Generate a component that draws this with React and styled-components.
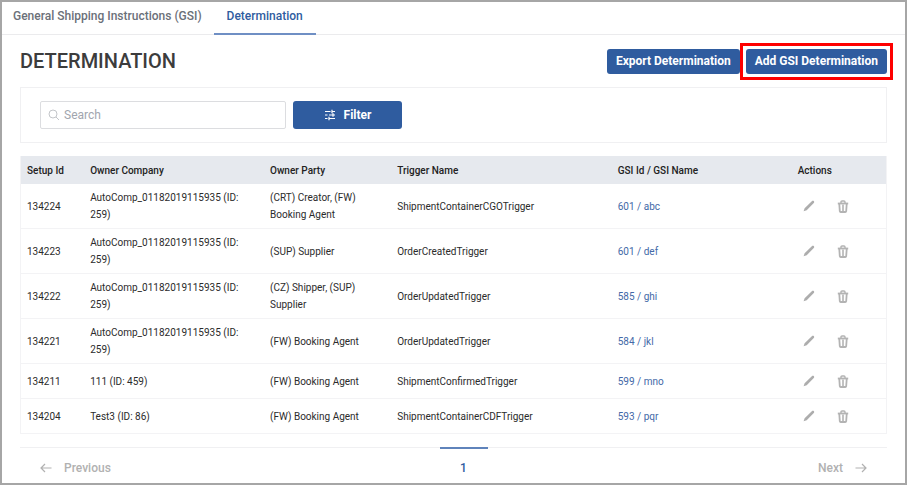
import React from "react";
import styled, { createGlobalStyle } from "styled-components";

const rows = [
  {
    id: "134224",
    company: "AutoComp_01182019115935 (ID: 259)",
    party: "(CRT) Creator, (FW) Booking Agent",
    trigger: "ShipmentContainerCGOTrigger",
    gsi: "601 / abc",
  },
  {
    id: "134223",
    company: "AutoComp_01182019115935 (ID: 259)",
    party: "(SUP) Supplier",
    trigger: "OrderCreatedTrigger",
    gsi: "601 / def",
  },
  {
    id: "134222",
    company: "AutoComp_01182019115935 (ID: 259)",
    party: "(CZ) Shipper, (SUP) Supplier",
    trigger: "OrderUpdatedTrigger",
    gsi: "585 / ghi",
  },
  {
    id: "134221",
    company: "AutoComp_01182019115935 (ID: 259)",
    party: "(FW) Booking Agent",
    trigger: "OrderUpdatedTrigger",
    gsi: "584 / jkl",
  },
  {
    id: "134211",
    company: "111 (ID: 459)",
    party: "(FW) Booking Agent",
    trigger: "ShipmentConfirmedTrigger",
    gsi: "599 / mno",
  },
  {
    id: "134204",
    company: "Test3 (ID: 86)",
    party: "(FW) Booking Agent",
    trigger: "ShipmentContainerCDFTrigger",
    gsi: "593 / pqr",
  },
];

const SearchIcon = () => (
  <svg width="12" height="12" viewBox="0 0 12 12" fill="none" stroke="#c3c5c9">
    <circle cx="5" cy="5" r="4" />
    <path d="M8 8l3 3" />
  </svg>
);

const FilterIcon = () => (
  <svg width="12" height="12" viewBox="0 0 12 12" fill="none" stroke="#fff" strokeWidth="1.2">
    <path d="M1 2.5h5.5M8 2.5h3M8 .8v3.4M1 6h2.5M5 6h6M9 4.3v3.4M1 9.5h2.5M5 9.5h6M5 7.8v3.4" />
  </svg>
);

const PencilIcon = () => (
  <svg width="12" height="12" viewBox="0 0 12 12" fill="#adadad">
    <path d="M.6 11.3l1-3.1 7.2-7c.6-.6 1.5-.6 2-.1s.6 1.4 0 2L3.7 10.3z" />
  </svg>
);

const TrashIcon = () => (
  <svg width="12" height="13" viewBox="0 0 12 13" fill="none" stroke="#b3b3b3">
    <path d="M.8 3.5h10.4" strokeWidth="1.8" />
    <path d="M4 3V2q0-1 1-1h2q1 0 1 1v1" strokeWidth="1.4" />
    <path d="M2.3 4l.5 7.2q.1.8.9.8h4.6q.8 0 .9-.8L9.7 4" strokeWidth="1.8" />
    <path d="M6 4.5v7" strokeWidth="1.6" />
  </svg>
);

const ArrowIcon = ({ d }) => (
  <svg width="12" height="12" viewBox="0 0 12 12" fill="none" stroke="#b1b1b1" strokeWidth="1.2">
    <path d={d} />
  </svg>
);

const App = () => {
  return (
    <Wrapper>
      <GlobalStyles />
      <Tabs>
        <Tab href="#gsi">General Shipping Instructions (GSI)</Tab>
        <Tab href="#determination" $active>
          Determination
        </Tab>
      </Tabs>
      <Content>
        <TitleRow>
          <Title>DETERMINATION</Title>
          <Button>Export Determination</Button>
          <Highlight>
            <Button>Add GSI Determination</Button>
          </Highlight>
        </TitleRow>

        <SearchPanel>
          <SearchBox>
            <SearchIcon />
            <SearchInput type="text" placeholder="Search" aria-label="Search" />
          </SearchBox>
          <FilterButton>
            <FilterIcon />
            Filter
          </FilterButton>
        </SearchPanel>

        <Table>
          <thead>
            <tr>
              <Th $width="7.3%">Setup Id</Th>
              <Th $width="20.8%">Owner Company</Th>
              <Th $width="14.7%">Owner Party</Th>
              <Th $width="25.5%">Trigger Name</Th>
              <Th $width="20.8%">GSI Id / GSI Name</Th>
              <Th>Actions</Th>
            </tr>
          </thead>
          <tbody>
            {rows.map((row) => (
              <tr key={row.id}>
                <Td>{row.id}</Td>
                <Td>{row.company}</Td>
                <Td>{row.party}</Td>
                <Td>{row.trigger}</Td>
                <Td>
                  <GsiLink href="#gsi">{row.gsi}</GsiLink>
                </Td>
                <Td>
                  <Actions>
                    <IconButton aria-label={`Edit ${row.id}`}>
                      <PencilIcon />
                    </IconButton>
                    <IconButton aria-label={`Delete ${row.id}`}>
                      <TrashIcon />
                    </IconButton>
                  </Actions>
                </Td>
              </tr>
            ))}
          </tbody>
        </Table>

        <Pagination>
          <PageStep>
            <ArrowIcon d="M11.5 6H1M5 2L1 6l4 4" />
            Previous
          </PageStep>
          <PageNumber aria-current="page">1</PageNumber>
          <PageStep $end>
            Next
            <ArrowIcon d="M.5 6H11M7 2l4 4-4 4" />
          </PageStep>
        </Pagination>
      </Content>
    </Wrapper>
  );
};

const GlobalStyles = createGlobalStyle`
  * {
    box-sizing: border-box;
  }

  body {
    margin: 0;
    background: #fff;
    font-family: Roboto, "Liberation Sans", sans-serif;
    color: #2b2b2b;
  }

  button, input {
    font-family: inherit;
  }

  svg {
    display: block;
    flex-shrink: 0;
  }
`;

const Wrapper = styled.div`
  min-height: 100vh;
  border: 2px solid #a6a6a6;
`;

const Tabs = styled.nav`
  display: flex;
  height: 33px;
  border-bottom: 1px solid #ebebed;
`;

const Tab = styled.a`
  height: 33px;
  padding: 6px 12px 0 11px;
  border-bottom: 2px solid ${(p) => (p.$active ? "#6f8fc4" : "transparent")};
  font-size: 12px;
  font-weight: 500;
  line-height: 16px;
  color: ${(p) => (p.$active ? "#2f5ca0" : "#6b7079")};
  text-decoration: none;

  & + & {
    padding: 6px 13px 0;
  }
`;

const Content = styled.main`
  padding: 0 18px;
`;

const TitleRow = styled.div`
  display: flex;
  align-items: center;
  height: 52px;
`;

const Title = styled.h1`
  flex: 1;
  margin: 0;
  font-size: 20px;
  font-weight: 500;
  line-height: 24px;
  color: #3c3c3c;
`;

const Button = styled.button`
  height: 25px;
  padding: 0 9px;
  border: 0;
  border-radius: 3px;
  background: #2f5c9f;
  color: #fff;
  font-size: 12px;
  font-weight: 700;
  white-space: nowrap;
  cursor: pointer;
`;

const Highlight = styled.div`
  display: flex;
  margin-right: -6px;
  padding: 3px;
  border: 3px solid #fe0000;
`;

const SearchPanel = styled.div`
  display: flex;
  align-items: center;
  gap: 7px;
  height: 56px;
  margin-bottom: 13px;
  padding: 0 19px;
  border: 1px solid #f0f0f2;
`;

const SearchBox = styled.label`
  display: flex;
  align-items: center;
  flex: 0 1 246px;
  gap: 4px;
  height: 28px;
  padding: 0 7px;
  border: 1px solid #dcdde0;
  border-radius: 2px;
`;

const SearchInput = styled.input`
  flex: 1;
  min-width: 0;
  padding: 0;
  border: 0;
  outline: 0;
  font-size: 12px;

  &::placeholder {
    color: #a1a5ae;
    opacity: 1;
  }
`;

const FilterButton = styled(Button)`
  display: flex;
  align-items: center;
  justify-content: center;
  gap: 8px;
  width: 109px;
  height: 28px;
`;

const Table = styled.table`
  width: 100%;
  table-layout: fixed;
  border: 1px solid #f3f3f5;
  border-width: 0 1px;
  border-spacing: 0;
  font-size: 10px;
  line-height: 17px;
`;

const Th = styled.th`
  width: ${(p) => p.$width || "auto"};
  height: 28px;
  padding: 0 6px;
  background: #e6e9ee;
  color: #222;
  font-weight: 500;
  text-align: left;
`;

const Td = styled.td`
  height: 35px;
  padding: 5px 6px;
  border-bottom: 1px solid #f3f3f5;
`;

const GsiLink = styled.a`
  color: #4369a7;
  text-decoration: none;
`;

const Actions = styled.div`
  display: flex;
  align-items: center;
  gap: 22px;
  padding-left: 5px;
`;

const IconButton = styled.button`
  padding: 0;
  border: 0;
  background: transparent;
  cursor: pointer;
`;

const Pagination = styled.nav`
  display: flex;
  margin-top: 13px;
  padding: 0 20px;
  border-top: 1px solid #f0f0f2;
`;

const PageStep = styled.button`
  display: flex;
  flex: 1;
  align-items: center;
  justify-content: ${(p) => (p.$end ? "flex-end" : "flex-start")};
  gap: 12px;
  height: 35px;
  padding: 4px 0 0;
  border: 0;
  background: transparent;
  color: #b1b1b1;
  font-size: 12px;
  font-weight: 500;
`;

const PageNumber = styled.button`
  width: 48px;
  height: 35px;
  margin: -1px 0 0 20px;
  padding: 4px 0 0;
  border: 0;
  border-top: 2px solid #5f83bb;
  background: transparent;
  color: #2f5ca0;
  font-size: 12px;
  font-weight: 500;
`;

export default App;
